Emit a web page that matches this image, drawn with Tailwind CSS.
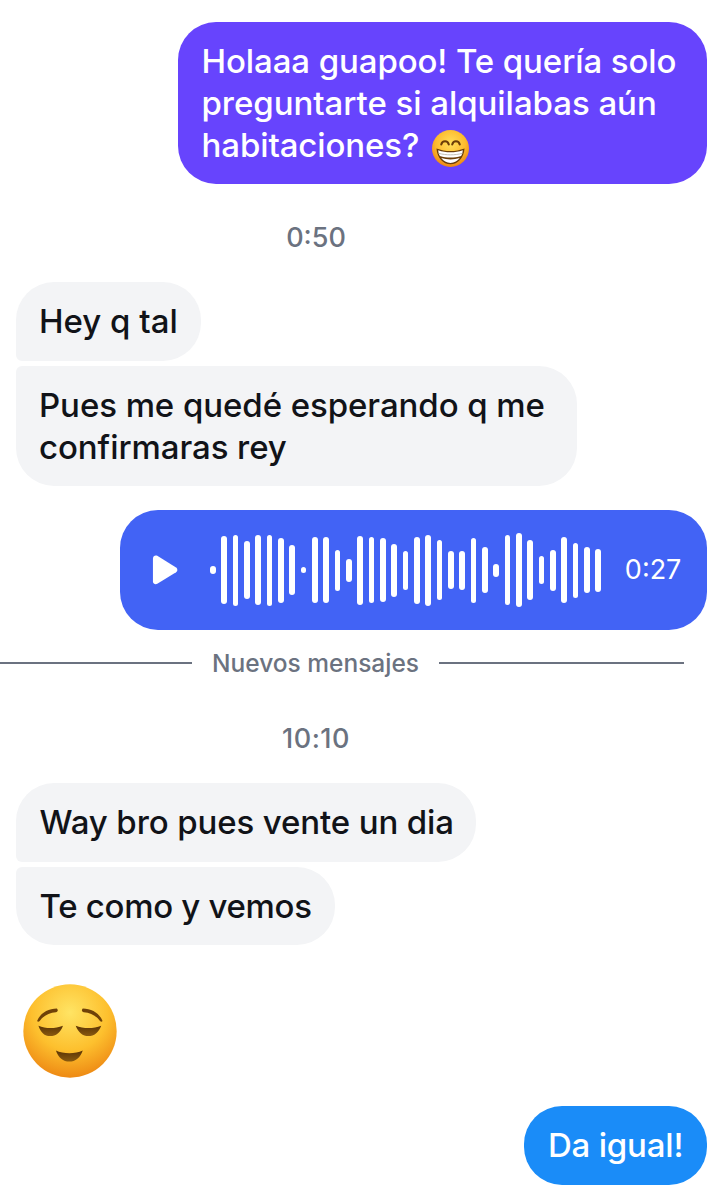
<!doctype html>
<html>
<head>
<meta charset="utf-8">
<script src="https://cdn.jsdelivr.net/npm/@tailwindcss/browser@4"></script>
</head>
<body class="bg-white">
<main class="relative w-[722px] h-[1200px] overflow-hidden pt-[22px] font-['Inter',sans-serif] text-[33px] leading-[42px]">
  <div class="flex justify-end pr-[15px]">
    <div class="w-[529px] rounded-[38px] bg-[#6744fd] pl-[23.500px] pr-[10px] py-[18px] text-white font-[450] tracking-[-0.1px] whitespace-nowrap">
      Holaaa guapoo! Te quería solo<br><span class="tracking-[-0.05px]">preguntarte si alquilabas aún</span><br>habitaciones?
      <svg class="inline-block align-middle -my-[10px] ml-[4px]" width="37" height="37" viewBox="21 8 108 108">
        <defs>
          <radialGradient id="a" cx="50%" cy="36%" r="64%"><stop offset="0" stop-color="#ffdf5c"/><stop offset=".62" stop-color="#fdbb2e"/><stop offset="1" stop-color="#ec8614"/></radialGradient>
        </defs>
        <circle cx="75" cy="62" r="54" fill="url(#a)"/>
        <path d="M48 50c3-12 19-12 22 0M80 50c3-12 19-12 22 0" fill="none" stroke="#6b3d08" stroke-width="6" stroke-linecap="round"/>
        <path d="M34 62c26 10 56 10 82 0-2 28-20 46-41 46S36 90 34 62z" fill="#6b3d08"/>
        <path d="M39 67c23 8 49 8 72 0-1 8-2 12-5 17-20 6-42 6-62 0-3-5-4-9-5-17z" fill="#fff"/>
        <path d="M48 90c17 5 37 5 54 0-6 9-16 14-27 14s-21-5-27-14z" fill="#fff"/>
        <path d="M40 76c22 6 48 6 70 0" fill="none" stroke="#b9b4a8" stroke-width="2.500"/>
      </svg>
    </div>
  </div>

  <div class="mt-[40px] w-[632px] text-center text-[#6b7280] text-[27px] leading-[28px] font-medium">0:50</div>

  <div class="mt-[30px] ml-[16px] flex flex-col items-start gap-[5px] text-[#111318] font-medium">
    <div class="w-[185px] rounded-[38px] rounded-bl-[6px] bg-[#f3f4f6] pl-[23px] pt-[18px] pb-[19px] whitespace-nowrap">Hey q tal</div>
    <div class="w-[561px] rounded-[38px] rounded-tl-[6px] bg-[#f3f4f6] pl-[23px] py-[18px] whitespace-nowrap tracking-[-0.07px]">Pues me quedé esperando q me<br>confirmaras rey</div>
  </div>

  <div class="mt-[24px] flex justify-end pr-[15px]">
    <div class="w-[587px] h-[120px] rounded-[38px] bg-[#4263f5] flex items-center text-white">
      <svg class="ml-[32px] shrink-0" width="26" height="32" viewBox="0 0 27 32"><path d="M1 4c0-2.600 2.400-3.900 4.500-2.700l19.500 12c1.800 1.200 1.800 3.800 0 5l-19.500 12C3.400 31.500 1 30.200 1 27.600z" fill="#fff"/></svg>
      <div class="ml-[32px] flex items-center gap-[5.65px] [&>i]:block [&>i]:w-[5.7px] [&>i]:rounded-full [&>i]:bg-white">
        <i class="h-[8px]"></i><i class="h-[68px]"></i><i class="h-[71px]"></i><i class="h-[58px]"></i><i class="h-[70px]"></i><i class="h-[71px]"></i><i class="h-[65px]"></i><i class="h-[50px]"></i><i class="h-[6px]"></i><i class="h-[66px]"></i><i class="h-[66px]"></i><i class="h-[41px]"></i><i class="h-[23px]"></i><i class="h-[69px]"></i><i class="h-[66px]"></i><i class="h-[64px]"></i><i class="h-[53px]"></i><i class="h-[39px]"></i><i class="h-[67px]"></i><i class="h-[71px]"></i><i class="h-[60px]"></i><i class="h-[38px]"></i><i class="h-[39px]"></i><i class="h-[65px]"></i><i class="h-[46px]"></i><i class="h-[13px]"></i><i class="h-[70px]"></i><i class="h-[74px]"></i><i class="h-[60px]"></i><i class="h-[28px]"></i><i class="h-[41px]"></i><i class="h-[66px]"></i><i class="h-[55px]"></i><i class="h-[46px]"></i><i class="h-[43px]"></i>
      </div>
      <span class="ml-[24px] text-[27px] leading-[28px]">0:27</span>
    </div>
  </div>

  <div class="mt-[17px] flex items-center h-[32px] w-[684px] text-[#6b7280]">
    <div class="w-[192px] h-[2px] bg-[#6b7280]"></div>
    <div class="w-[247px] text-center text-[24.500px] leading-[28px] font-medium">Nuevos mensajes</div>
    <div class="flex-1 h-[2px] bg-[#6b7280]"></div>
  </div>

  <div class="mt-[46px] w-[632px] text-center text-[#6b7280] text-[27px] leading-[28px] font-medium tracking-[0.5px]">10:10</div>

  <div class="mt-[30px] ml-[16px] flex flex-col items-start gap-[5px] text-[#111318] font-medium">
    <div class="w-[460px] rounded-[38px] rounded-bl-[6px] bg-[#f3f4f6] pl-[23.500px] pt-[18px] pb-[19px] whitespace-nowrap tracking-[-0.12px]">Way bro pues vente un dia</div>
    <div class="w-[319px] rounded-[38px] rounded-tl-[6px] bg-[#f3f4f6] pl-[23.500px] py-[18px] whitespace-nowrap tracking-[-0.3px]">Te como y vemos</div>
  </div>

  <svg class="block mt-[39px] ml-[23px]" width="94" height="94" viewBox="70 42 280 280">
    <defs>
      <radialGradient id="b" cx="50%" cy="30%" r="70%"><stop offset="0" stop-color="#ffe464"/><stop offset=".58" stop-color="#fdc02e"/><stop offset="1" stop-color="#ee8a14"/></radialGradient>
      <linearGradient id="c" x1="0" y1="0" x2="0" y2="1"><stop offset="0" stop-color="#5a3305"/><stop offset="1" stop-color="#8a5a10"/></linearGradient>
    </defs>
    <circle cx="210" cy="182" r="139" fill="url(#b)"/>
    <path d="M113 150C122 129 145 115 171 115C176 120 173 126 168 126C148 127 131 136 119 153C115 156 111 154 113 150Z" fill="#6f4108"/>
    <path d="M306 150C297 129 274 115 248 115C243 120 246 126 251 126C271 127 288 136 300 153C304 156 308 154 306 150Z" fill="#6f4108"/>
    <path d="M116 166C138 175 165 175 189 166C182 186 168 197 151 197C134 197 123 186 116 166Z" fill="url(#c)"/>
    <path d="M227 166C250 175 280 175 303 166C295 186 282 197 265 197C248 197 235 186 227 166Z" fill="url(#c)"/>
    <path d="M168 240C190 251 226 251 248 240C241 262 226 273 208 273C190 273 175 262 168 240Z" fill="url(#c)"/>
  </svg>

  <div class="mt-[28px] flex justify-end pr-[15px]">
    <div class="w-[183px] rounded-[38px] bg-[#1a8cf8] pl-[24px] pt-[18px] pb-[19px] text-white whitespace-nowrap font-[450] tracking-[-0.2px]">Da igual!</div>
  </div>
</main>
</body>
</html>
